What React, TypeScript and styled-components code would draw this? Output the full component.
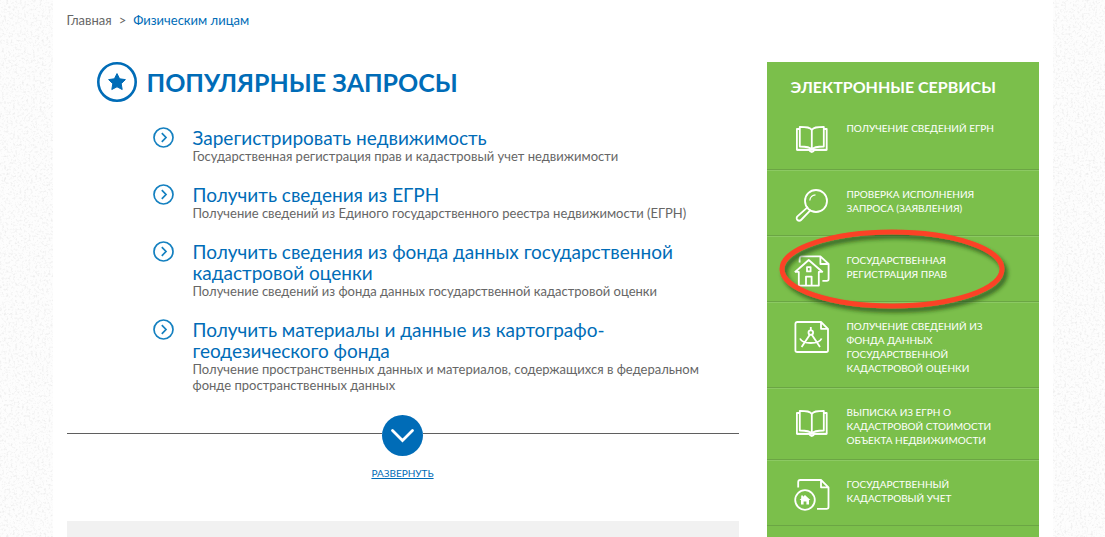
import React from "react";
import styled, { createGlobalStyle } from "styled-components";

const blue = "#006cb7";
const green = "#7bbf4b";

const GlobalStyle = createGlobalStyle`
  *, *::before, *::after { box-sizing: border-box; }
  body {
    margin: 0;
    background: #fdfdfd;
    color: #666;
    font-family: Lato, "Open Sans", sans-serif;
    font-size: 13px;
  }
  h1, h2, h3, p, ul, ol { margin: 0; padding: 0; }
  ul, ol { list-style: none; }
`;

const Grain = styled.svg`
  position: fixed;
  inset: 0;
  width: 100%;
  height: 100%;
  z-index: -1;
`;

const Page = styled.div`
  display: flex;
  flex-direction: column;
  max-width: 1000px;
  min-height: 100vh;
  margin: 0 auto;
  padding: 0 14px;
  background: #fff;
`;

const Crumbs = styled.nav`
  display: flex;
  gap: 7px;
  height: 62px;
  padding-top: 12px;
  line-height: 16px;
`;

const CrumbLink = styled.a<{ $current?: boolean }>`
  color: ${(p) => (p.$current ? blue : "#666")};
  text-decoration: none;
`;

const Columns = styled.div`
  flex: 1;
  display: grid;
  grid-template-columns: minmax(0, 1fr) 272px;
  gap: 28px;
`;

const Main = styled.main`
  display: flex;
  flex-direction: column;
`;

const Heading = styled.div`
  display: flex;
  align-items: center;
  gap: 10px;
  margin: 0 0 25px 30px;
  color: ${blue};
`;

const Title = styled.h1`
  font-size: 25px;
  line-height: 36px;
  font-weight: 700;
`;

const QueryList = styled.ul`
  display: flex;
  flex-direction: column;
  gap: 20px;
  padding: 0 32px 0 86px;
`;

const Query = styled.li`
  display: flex;
  gap: 19px;
  > svg { flex: none; }
`;

const QueryTitle = styled.h2`
  font-size: 19px;
  line-height: 21px;
  font-weight: 400;
`;

const QueryLink = styled.a`
  color: ${blue};
  text-decoration: none;
`;

const QueryText = styled.p`
  line-height: 16px;
`;

const Expander = styled.div`
  display: flex;
  align-items: center;
  margin-top: 22px;
`;

const Rule = styled.span`
  flex: 1;
  height: 1px;
  margin-bottom: 4px;
  background: #5f5f5f;
`;

const RoundButton = styled.button`
  display: grid;
  place-items: center;
  width: 41px;
  height: 41px;
  padding: 0;
  border: 0;
  border-radius: 50%;
  background: ${blue};
`;

const ExpandLink = styled.a`
  align-self: center;
  margin: 9px 0 40px;
  color: ${blue};
  font-size: 10px;
  line-height: 16px;
  text-transform: uppercase;
`;

const NextPanel = styled.section`
  flex: 1;
  background: #f1f1f1;
`;

const Sidebar = styled.aside`
  background: ${green};
  color: #fff;
`;

const SidebarTitle = styled.h2`
  height: 42px;
  padding: 14px 24px 0;
  font-size: 16px;
  line-height: 22px;
  font-weight: 700;
`;

const Service = styled.li`
  position: relative;
  border-top: 1px solid #8cc963;
  border-bottom: 1px solid #6ba544;
  &:first-child { border-top-color: ${green}; }
`;

const ServiceLink = styled.a`
  display: grid;
  grid-template-columns: 36px 1fr;
  gap: 17px;
  padding: 16px 36px 12px 27px;
  color: #fff;
  font-size: 10px;
  line-height: 14px;
  text-decoration: none;
  text-transform: uppercase;
`;

const Marker = styled.svg`
  position: absolute;
  left: 8px;
  top: -12px;
  z-index: 1;
  pointer-events: none;
`;

const icons = {
  book: (
    <>
      <path d="M17.8 9C16.2 6.2 13 5.8 5.8 5.8V25.5C12 25.5 16 26 17.8 28.5C19.6 26 23.6 25.5 29.8 25.5V5.8C22.6 5.8 19.4 6.2 17.8 9V28.5" />
      <path d="M5.8 8H2.9V28.8H15.2Q16.2 31 17.8 31T20.4 28.8H32.7V8H29.8" />
      <path d="M3 28.8H32.6" strokeWidth="2" />
    </>
  ),
  search: (
    <>
      <circle cx="22" cy="14" r="11" />
      <path d="M15.8 13.5C16 10.3 18.5 8 21.5 7.8" strokeWidth="1.2" />
      <path d="M14 19.8L3.4 29.4A2.5 2.5 0 0 0 7 33L16.8 22.8" />
    </>
  ),
  house: (
    <>
      <path d="M0.8 19.2L14.7 7L28.8 19.2M1 18.9H4.8V32.6H24.8V18.9H28.6" />
      <path d="M13 14.2H16.6V18.4H13ZM12 32V23.6H17.6V32" />
      <path d="M5.6 9.5V6Q5.6 3.4 7.6 3.4H26.4L34.6 11V26Q34.6 27.8 32.8 27.8H28.4M26.4 3.4V11H34.6" />
    </>
  ),
  compass: (
    <>
      <path d="M3.4 3H27L34 9.8V31.2Q34 33 32.2 33H3.2Q1.4 33 1.4 31.2V5Q1.4 3 3.4 3ZM27 3V9.8H34" />
      <circle cx="16.8" cy="13.6" r="2.3" />
      <path d="M16.8 8V11M15.8 15.8L7.6 28M17.8 15.8L26 28M6 19.5Q8 24 16.8 24T27.6 19.5" />
    </>
  ),
  register: (
    <>
      <path d="M4.2 10.5V5Q4.2 3 6.2 3H27L34.5 10.3V30Q34.5 31.8 32.7 31.8H23M27 3V10.3H34.5" />
      <circle cx="11" cy="23" r="9.8" />
      <path
        d="M11 18L16.4 23H15V27.6H12.4V24.4H9.6V27.6H7V23H5.6L7.2 21.4V18.4H9V19.8Z"
        fill="#fff"
        stroke="none"
      />
    </>
  ),
};

const services: { icon: keyof typeof icons; label: string; marked?: boolean }[] = [
  { icon: "book", label: "Получение сведений ЕГРН" },
  { icon: "search", label: "Проверка исполнения запроса (заявления)" },
  { icon: "house", label: "Государственная регистрация прав", marked: true },
  { icon: "compass", label: "Получение сведений из фонда данных государственной кадастровой оценки" },
  { icon: "book", label: "Выписка из ЕГРН о кадастровой стоимости объекта недвижимости" },
  { icon: "register", label: "Государственный кадастровый учет" },
];

const queries = [
  {
    title: "Зарегистрировать недвижимость",
    text: "Государственная регистрация прав и кадастровый учет недвижимости",
  },
  {
    title: "Получить сведения из ЕГРН",
    text: "Получение сведений из Единого государственного реестра недвижимости (ЕГРН)",
  },
  {
    title: "Получить сведения из фонда данных государственной кадастровой оценки",
    text: "Получение сведений из фонда данных государственной кадастровой оценки",
  },
  {
    title: "Получить материалы и данные из картографо-геодезического фонда",
    text: "Получение пространственных данных и материалов, содержащихся в федеральном фонде пространственных данных",
  },
];

export default function App() {
  return (
    <>
      <GlobalStyle />
      <Grain aria-hidden="true">
        <filter id="grain" x="0" y="0" width="100%" height="100%">
          <feTurbulence type="fractalNoise" baseFrequency="0.45" numOctaves="2" seed="4" />
          <feColorMatrix values="0 0 0 0 0.8  0 0 0 0 0.8  0 0 0 0 0.8  2 0 0 0 -0.98" />
        </filter>
        <rect width="100%" height="100%" filter="url(#grain)" />
      </Grain>
      <Page>
        <Crumbs aria-label="Навигация">
          <CrumbLink href="#">Главная</CrumbLink>
          <span>&gt;</span>
          <CrumbLink href="#" $current>Физическим лицам</CrumbLink>
        </Crumbs>
        <Columns>
          <Main>
            <Heading>
              <svg width="40" height="40" viewBox="0 0 40 40" fill="none" aria-hidden="true">
                <circle cx="20" cy="20" r="18.7" stroke={blue} strokeWidth="2.6" />
                <path
                  d="M20 11.6L22.6 16.8L28.4 17.6L24.2 21.7L25.2 27.5L20 24.8L14.8 27.5L15.8 21.7L11.6 17.6L17.4 16.8Z"
                  fill={blue}
                  stroke={blue}
                  strokeLinejoin="round"
                />
              </svg>
              <Title>ПОПУЛЯРНЫЕ ЗАПРОСЫ</Title>
            </Heading>
            <QueryList>
              {queries.map((q) => (
                <Query key={q.title}>
                  <svg width="21" height="21" viewBox="0 0 21 21" fill="none" stroke="#1480c0" aria-hidden="true">
                    <circle cx="10.5" cy="10.5" r="9.5" strokeWidth="1.7" />
                    <path d="M8.8 6.2L13 10.5L8.8 14.8" strokeWidth="1.7" />
                  </svg>
                  <div>
                    <QueryTitle>
                      <QueryLink href="#">{q.title}</QueryLink>
                    </QueryTitle>
                    <QueryText>{q.text}</QueryText>
                  </div>
                </Query>
              ))}
            </QueryList>
            <Expander>
              <Rule />
              <RoundButton type="button" aria-label="Развернуть">
                <svg width="25" height="15" viewBox="0 0 25 15" fill="none" aria-hidden="true">
                  <path d="M2.5 2.5L12.5 12.5L22.5 2.5" stroke="#fff" strokeWidth="2.8" strokeLinecap="round" />
                </svg>
              </RoundButton>
              <Rule />
            </Expander>
            <ExpandLink href="#">Развернуть</ExpandLink>
            <NextPanel />
          </Main>
          <Sidebar>
            <SidebarTitle>ЭЛЕКТРОННЫЕ СЕРВИСЫ</SidebarTitle>
            <ul>
              {services.map((s) => (
                <Service key={s.label}>
                  <ServiceLink href="#">
                    <svg
                      width="36"
                      height="36"
                      viewBox="0 0 36 36"
                      fill="none"
                      stroke="#fff"
                      strokeWidth="1.8"
                      strokeLinejoin="round"
                      aria-hidden="true"
                    >
                      {icons[s.icon]}
                    </svg>
                    <span>{s.label}</span>
                  </ServiceLink>
                  {s.marked && (
                    <Marker width="240" height="94" viewBox="0 0 240 94" fill="none" aria-hidden="true">
                      <filter id="markerShadow" x="-10%" y="-10%" width="120%" height="130%">
                        <feDropShadow dx="3" dy="4" stdDeviation="2" floodColor="#1c3a08" floodOpacity="0.7" />
                      </filter>
                      <ellipse
                        cx="117"
                        cy="44"
                        rx="110"
                        ry="37"
                        stroke="#fb4226"
                        strokeWidth="5"
                        filter="url(#markerShadow)"
                      />
                    </Marker>
                  )}
                </Service>
              ))}
            </ul>
          </Sidebar>
        </Columns>
      </Page>
    </>
  );
}
